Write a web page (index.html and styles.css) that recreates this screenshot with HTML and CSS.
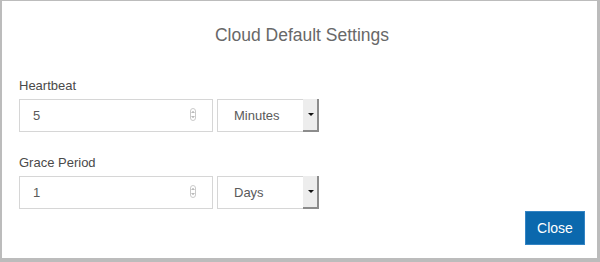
FILE: index.html
```html
<!DOCTYPE html>
<html>
<head>
<meta charset="utf-8">
<link rel="stylesheet" href="styles.css">
</head>
<body>
<div class="dialog">
  <h1 class="title">Cloud Default Settings</h1>
  <div class="form">
    <div class="group">
      <div class="label">Heartbeat</div>
      <div class="row">
        <div class="input"><span class="value">5</span>
          <svg class="spin" width="6" height="13" viewBox="0 0 6 13"><rect x="0.5" y="0.5" width="5" height="12" rx="2.5" fill="#fff" stroke="#bdbdbd" stroke-width="0.8"/><path d="M1.7 5 L3 3.5 L4.3 5" fill="none" stroke="#777" stroke-width="0.8"/><path d="M1.7 8 L3 9.5 L4.3 8" fill="none" stroke="#777" stroke-width="0.8"/></svg>
        </div>
        <div class="select"><span class="value sel">Minutes</span><span class="arrow"><span class="tri"></span></span></div>
      </div>
    </div>
    <div class="group second">
      <div class="label">Grace Period</div>
      <div class="row">
        <div class="input"><span class="value">1</span>
          <svg class="spin" width="6" height="13" viewBox="0 0 6 13"><rect x="0.5" y="0.5" width="5" height="12" rx="2.5" fill="#fff" stroke="#bdbdbd" stroke-width="0.8"/><path d="M1.7 5 L3 3.5 L4.3 5" fill="none" stroke="#777" stroke-width="0.8"/><path d="M1.7 8 L3 9.5 L4.3 8" fill="none" stroke="#777" stroke-width="0.8"/></svg>
        </div>
        <div class="select"><span class="value sel">Days</span><span class="arrow"><span class="tri"></span></span></div>
      </div>
    </div>
  </div>
  <div class="footer"><button class="btn">Close</button></div>
</div>
</body>
</html>
```
FILE: styles.css
```css
html, body {
  margin: 0;
  padding: 0;
  background: #fff;
}
.dialog {
  width: 600px;
  height: 262px;
  box-sizing: border-box;
  border-style: solid;
  border-color: #bcbcbc;
  border-width: 1px 3px 4px 2px;
  padding: 24px 12px 0 17px;
  font-family: "Liberation Sans", Arial, sans-serif;
  color: #444;
}
.title {
  margin: 0;
  font-size: 17.5px;
  line-height: 20px;
  font-weight: normal;
  text-align: center;
  color: #686868;
}
.form {
  margin-top: 33px;
}
.group.second {
  margin-top: 23px;
}
.label {
  font-size: 13px;
  line-height: 15px;
  margin-bottom: 6px;
  color: #4a4a4a;
}
.row {
  display: flex;
  gap: 4px;
}
.input {
  width: 194px;
  height: 33px;
  box-sizing: border-box;
  border: 1px solid #d6d6d6;
  display: flex;
  align-items: center;
  justify-content: space-between;
  padding: 0 16px 0 13px;
}
.value {
  font-size: 13px;
  color: #5a5a5a;
}
.spin {
  display: block;
  margin-top: -3px;
}
.select {
  width: 102px;
  height: 33px;
  box-sizing: border-box;
  border: 1px solid #d6d6d6;
  border-right: none;
  display: flex;
  align-items: center;
  justify-content: space-between;
  padding-left: 16px;
}
.arrow {
  align-self: stretch;
  width: 14px;
  margin-top: -1px;
  margin-bottom: -1px;
  background: #ededed;
  border-right: 2px solid #8c8c8c;
  border-bottom: 2px solid #8c8c8c;
  display: flex;
  align-items: center;
  justify-content: center;
}
.tri {
  width: 0;
  height: 0;
  border-left: 3px solid transparent;
  border-right: 3px solid transparent;
  border-top: 3px solid #111;
  margin-left: 1px;
}
.footer {
  display: flex;
  justify-content: flex-end;
  margin-top: 2px;
}
.btn {
  width: 60px;
  height: 34px;
  box-sizing: border-box;
  background: #0b68ad;
  border: 1px solid #3384c4;
  color: #fff;
  font-family: "Liberation Sans", Arial, sans-serif;
  font-size: 14px;
  padding: 0;
  margin: 0;
}
```
